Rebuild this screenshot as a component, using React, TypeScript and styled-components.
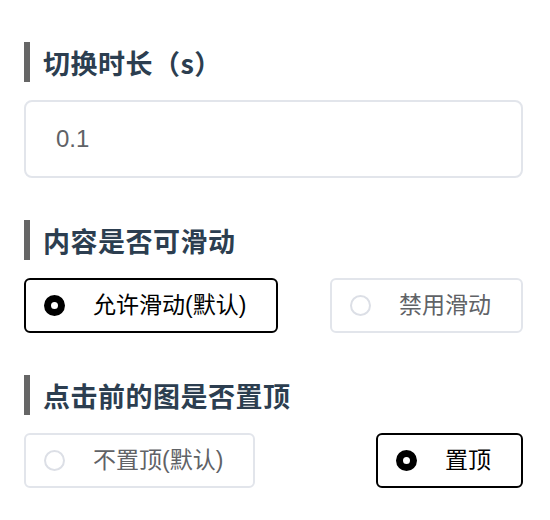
import React, { useState } from "react";
import styled, { createGlobalStyle } from "styled-components";

const GlobalStyle = createGlobalStyle`
  html, body {
    margin: 0;
    padding: 0;
    background: #ffffff;
  }
  body {
    font-family: "Liberation Sans", "Noto Sans CJK SC", sans-serif;
  }
  * { box-sizing: border-box; }
`;

const Page = styled.div`
  display: flex;
  flex-direction: column;
  gap: 42px;
  width: 523px;
  padding: 42px 0 0 24px;
`;

const Section = styled.section`
  display: flex;
  flex-direction: column;
  gap: 18px;
`;

const Heading = styled.h2`
  margin: 0;
  height: 40px;
  display: flex;
  align-items: center;
  border-left: 6px solid #666666;
  padding-left: 13px;
  font-family: "Noto Sans CJK SC", sans-serif;
  font-size: 27px;
  font-weight: 700;
  color: #2c3e50;
  letter-spacing: 0.5px;
`;

const TextInput = styled.input`
  width: 100%;
  height: 78px;
  border: 2px solid #e2e5eb;
  border-radius: 8px;
  padding: 0 30px;
  font-family: "Liberation Sans", "Noto Sans CJK SC", sans-serif;
  font-size: 24px;
  color: #606266;
  outline: none;
  background: #fff;
`;

const OptionRow = styled.div`
  display: flex;
  justify-content: space-between;
  align-items: center;
`;

const OptionBox = styled.button<{ $checked: boolean }>`
  display: flex;
  align-items: center;
  gap: 28px;
  height: 55px;
  padding: 0 30px 0 18px;
  border: 2px solid ${(p) => (p.$checked ? "#000000" : "#e2e5eb")};
  border-radius: 6px;
  background: #ffffff;
  cursor: pointer;
  font-family: "Liberation Sans", "Noto Sans CJK SC", sans-serif;
  font-size: 23px;
  color: ${(p) => (p.$checked ? "#000000" : "#606266")};
  line-height: 1;
`;

const RadioDot = styled.span<{ $checked: boolean }>`
  flex: none;
  width: 21px;
  height: 21px;
  border-radius: 50%;
  border: ${(p) => (p.$checked ? "7px solid #000000" : "2px solid #dcdfe6")};
  background: #ffffff;
`;

const Label = styled.span`
  white-space: nowrap;
`;

type Opt = { key: string; label: string };

function RadioGroup({ options, initial }: { options: Opt[]; initial: string }) {
  const [value, setValue] = useState(initial);
  return (
    <OptionRow>
      {options.map((o) => (
        <OptionBox
          key={o.key}
          type="button"
          $checked={value === o.key}
          onClick={() => setValue(o.key)}
        >
          <RadioDot $checked={value === o.key} />
          <Label>{o.label}</Label>
        </OptionBox>
      ))}
    </OptionRow>
  );
}

export default function App() {
  return (
    <>
      <GlobalStyle />
      <Page>
        <Section>
          <Heading>切换时长（s）</Heading>
          <TextInput defaultValue="0.1" />
        </Section>
        <Section>
          <Heading>内容是否可滑动</Heading>
          <RadioGroup
            initial="allow"
            options={[
              { key: "allow", label: "允许滑动(默认)" },
              { key: "deny", label: "禁用滑动" },
            ]}
          />
        </Section>
        <Section>
          <Heading>点击前的图是否置顶</Heading>
          <RadioGroup
            initial="top"
            options={[
              { key: "none", label: "不置顶(默认)" },
              { key: "top", label: "置顶" },
            ]}
          />
        </Section>
      </Page>
    </>
  );
}
